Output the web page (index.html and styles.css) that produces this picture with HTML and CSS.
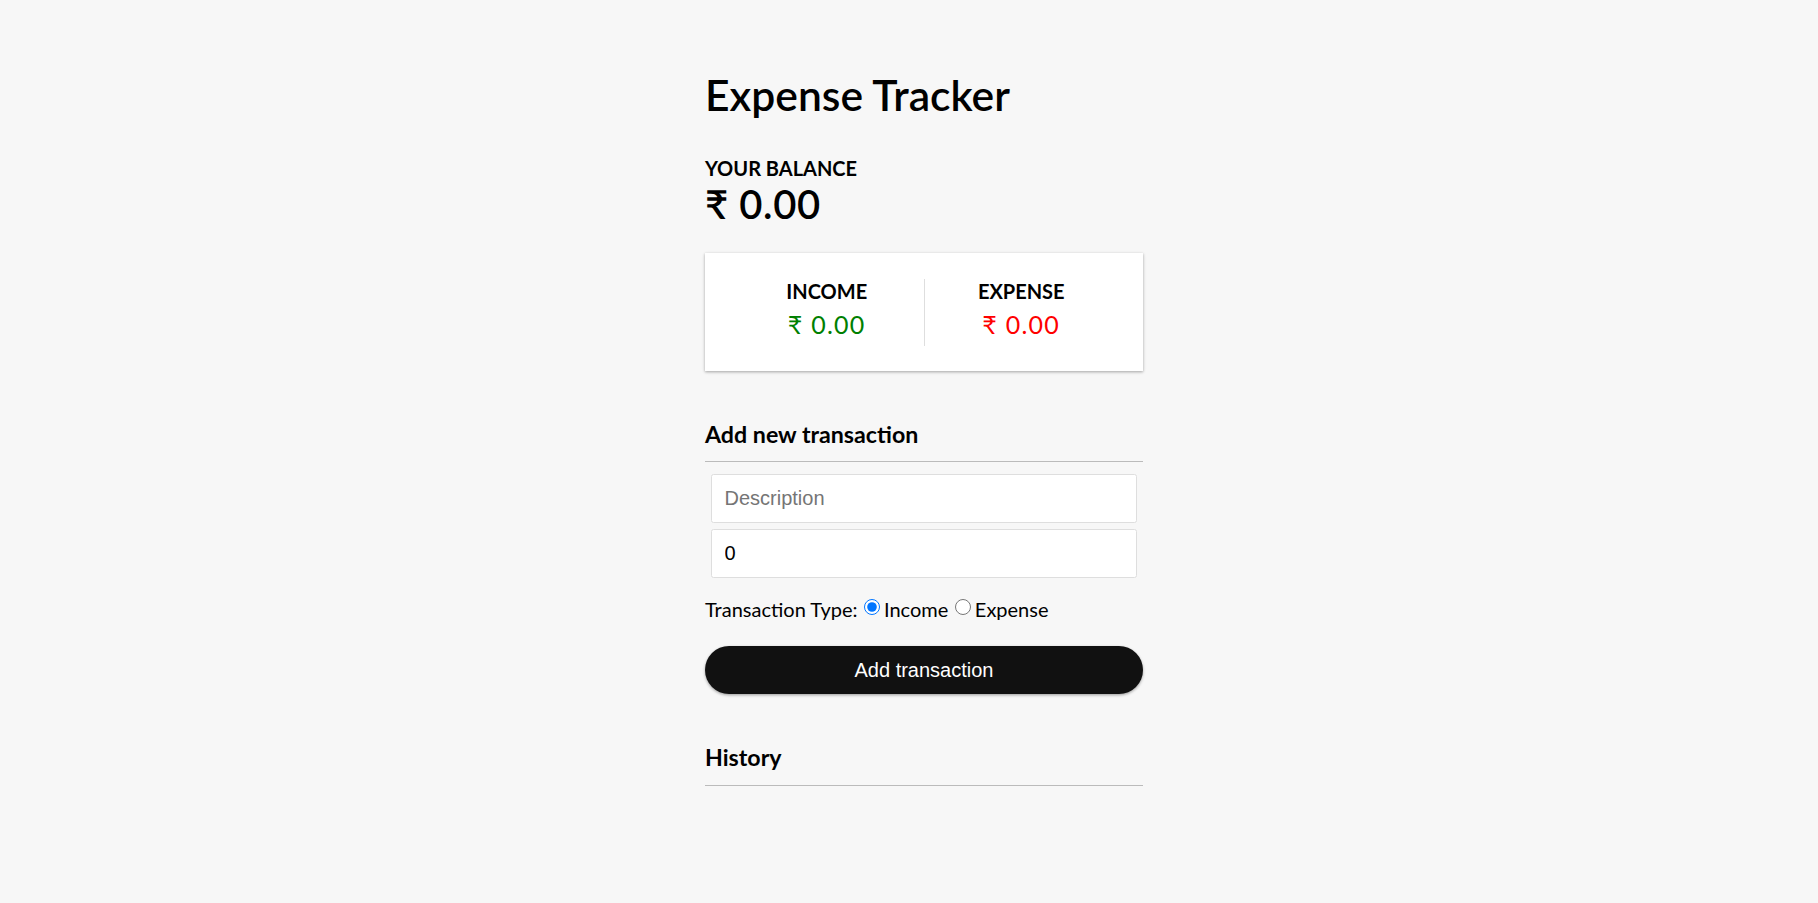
FILE: index.html
```html
<!DOCTYPE html>
<html lang="en">
<head>
<meta charset="UTF-8">
<title>Expense Tracker</title>
<link rel="stylesheet" href="styles.css">
</head>
<body>
  <div class="container">
    <h2 class="title">Expense Tracker</h2>
    <h4 class="label-upper">Your Balance</h4>
    <h1 class="balance">₹ 0.00</h1>

    <div class="inc-exp">
      <div class="inc-exp-item divider">
        <h4 class="label-upper">Income</h4>
        <p class="money plus">₹ 0.00</p>
      </div>
      <div class="inc-exp-item">
        <h4 class="label-upper">Expense</h4>
        <p class="money minus">₹ 0.00</p>
      </div>
    </div>

    <h3 class="section-title">Add new transaction</h3>
    <form class="form">
      <div class="inputs">
        <input class="field" type="text" placeholder="Description">
        <input class="field" type="number" value="0">
      </div>
      <div class="type-row">
        <span>Transaction Type:</span>
        <input class="radio" type="radio" name="type" id="inc" checked><label for="inc">Income</label>
        <input class="radio" type="radio" name="type" id="exp"><label for="exp">Expense</label>
      </div>
      <button class="btn" type="button">Add transaction</button>
    </form>

    <h3 class="section-title history">History</h3>
    <ul class="list"></ul>
  </div>
</body>
</html>
```
FILE: styles.css
```css
* { box-sizing: border-box; }

body {
  margin: 0;
  padding: 0 0 0 30px;
  background-color: #f7f7f7;
  font-family: "Lato", "Noto Sans", sans-serif;
  color: #000;
}

.container {
  width: 438px;
  margin: 0 auto;
  padding-top: 69px;
}

.title {
  margin: 0 0 36px;
  font-size: 42.6px;
  font-weight: 600;
  line-height: 1.2;
  letter-spacing: 0;
}

.label-upper {
  margin: 0;
  font-size: 20px;
  font-weight: 700;
  line-height: 1.2;
  text-transform: uppercase;
}

.balance {
  margin: 0;
  font-size: 40px;
  font-weight: 600;
  line-height: 1.2;
  letter-spacing: 0.6px;
}

.inc-exp {
  display: flex;
  margin: 25px 0;
  padding: 26px 25px 25px;
  background-color: #fff;
  box-shadow: 0 1.25px 3.75px rgba(0, 0, 0, 0.12), 0 1.25px 2.5px rgba(0, 0, 0, 0.24);
}

.inc-exp-item {
  flex: 1;
  text-align: center;
}

.divider {
  border-right: 1px solid #dedede;
}

.money {
  margin: 6.25px 0;
  font-size: 25px;
  line-height: 1.2;
  letter-spacing: 1.25px;
}

.plus { color: #008000; }
.minus { color: #ff0000; }

.section-title {
  margin: 50px 0 12.5px;
  padding-bottom: 12.5px;
  border-bottom: 1.25px solid #bbb;
  font-size: 23.2px;
  font-weight: 700;
  line-height: 1.2;
}

.form { margin: 0; }

.inputs {
  display: flex;
  flex-direction: column;
  gap: 6px;
  padding: 0 6px;
}

.field {
  display: block;
  width: 100%;
  height: 49px;
  padding: 12.5px;
  border: 1.25px solid #dedede;
  border-radius: 2.5px;
  background: #fff;
  font-family: "Liberation Sans", Arial, sans-serif;
  font-size: 20px;
  color: #000;
  outline: none;
}

.field::placeholder { color: #757575; }

.field::-webkit-inner-spin-button,
.field::-webkit-outer-spin-button { -webkit-appearance: none; margin: 0; }

.type-row {
  display: flex;
  align-items: center;
  margin: 19px 0 0;
  height: 24px;
  font-size: 20px;
  line-height: 24px;
}

.radio {
  width: 16px;
  height: 16px;
  margin: 0 3.5px 4px 7px;
  accent-color: #0075ff;
}

.btn {
  display: block;
  width: 100%;
  height: 48px;
  margin: 25px 0 37.5px;
  padding: 12.5px;
  border: 0;
  border-radius: 24px;
  background-color: #111;
  color: #fff;
  font-family: "Liberation Sans", Arial, sans-serif;
  font-size: 20px;
  box-shadow: 0 1.25px 3.75px rgba(0, 0, 0, 0.12), 0 1.25px 2.5px rgba(0, 0, 0, 0.24);
  cursor: pointer;
}

.history { margin-top: 50px; }

.list {
  margin: 0;
  padding: 0;
  list-style: none;
}
```
